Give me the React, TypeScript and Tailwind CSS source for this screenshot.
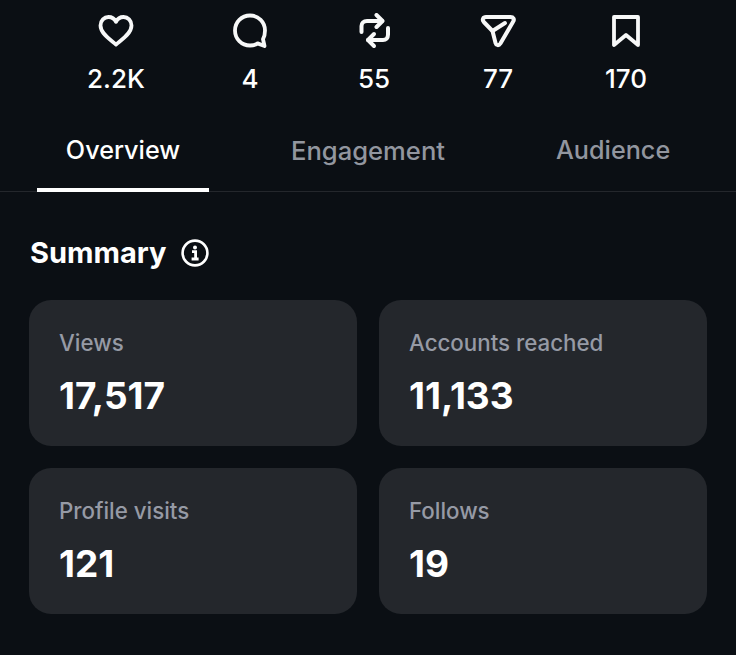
const HeartIcon = () => (
  <svg width="36" height="32" viewBox="0 0 36 32" fill="none" stroke="currentColor" strokeWidth="3.8" strokeLinejoin="round" strokeLinecap="round">
    <path d="M18 29.5 C14 26 2.5 19 2.5 10.5 C2.5 5.5 6.2 2 10.5 2 C13.6 2 16.5 3.8 18 6.8 C19.5 3.8 22.4 2 25.5 2 C29.8 2 33.5 5.5 33.5 10.5 C33.5 19 22 26 18 29.5 Z" />
  </svg>
);

const CommentIcon = () => (
  <svg width="36" height="36" viewBox="0 0 36 36" fill="none" stroke="currentColor" strokeWidth="3.8" strokeLinejoin="round" strokeLinecap="round">
    <path d="M18 2.5 C9.5 2.5 3 9.2 3 17.5 C3 25.8 9.5 32.5 18 32.5 C21 32.5 23.6 31.8 25.6 30.4 L32.5 33 L31 26.2 C32.3 23.8 33 20.8 33 17.5 C33 9.2 26.5 2.5 18 2.5 Z" />
  </svg>
);

const RepostIcon = () => (
  <svg width="32" height="36" viewBox="0 0 32 36" fill="none" stroke="currentColor" strokeWidth="4" strokeLinejoin="round" strokeLinecap="round">
    <path d="M3.5 19 V13 C3.5 10 5.5 8 9 8 H24" />
    <path d="M18.5 2 L24.5 8 L18.5 14" />
    <path d="M30 15 V21.5 C30 25 28 27 25 27 H10" />
    <path d="M16 21 L10 27 L16 33" />
  </svg>
);

const SendIcon = () => (
  <svg width="36" height="34" viewBox="0 0 36 34" fill="none" stroke="currentColor" strokeWidth="4" strokeLinejoin="round" strokeLinecap="round">
    <path d="M6 3 H30.5 C33.5 3 34.6 5.4 33.2 7.5 L20.4 29.5 C18.8 32 16.2 31.4 15.6 29.2 L12.5 17 L3.8 8 C1.8 5.8 3 3 6 3 Z" />
    <path d="M12.5 17 L25 9" />
  </svg>
);

const BookmarkIcon = () => (
  <svg width="28" height="32" viewBox="0 0 28 32" fill="none" stroke="currentColor" strokeWidth="3.8" strokeLinejoin="round" strokeLinecap="round">
    <path d="M2 2 H26 V30 L14 20 L2 30 Z" />
  </svg>
);

const InfoIcon = () => (
  <svg width="28" height="28" viewBox="0 0 28 28" fill="none" stroke="currentColor">
    <circle cx="14" cy="14" r="12.4" strokeWidth="2.6" />
    <circle cx="14" cy="8.4" r="2" fill="currentColor" stroke="none" />
    <path d="M11 12.6 H14.6 V19.6 M10.6 20 H17.6" strokeWidth="2.8" />
  </svg>
);

const stats = [
  { icon: <HeartIcon />, value: "2.2K", className: "ml-[86px]" },
  { icon: <CommentIcon />, value: "4", className: "ml-[74px]" },
  { icon: <RepostIcon />, value: "55", className: "ml-[64px]" },
  { icon: <SendIcon />, value: "77", className: "ml-[64px]" },
  { icon: <BookmarkIcon />, value: "170", className: "ml-[68px]" },
];

const cards = [
  { label: "Views", value: "17,517" },
  { label: "Accounts reached", value: "11,133" },
  { label: "Profile visits", value: "121" },
  { label: "Follows", value: "19" },
];

const App = () => {
  return (
    <div className="h-[655px] w-[736px] overflow-hidden bg-[#0b0f14] font-['Inter',sans-serif] text-white">
      <div className="flex pt-[13px]">
        {stats.map((s) => (
          <div key={s.value} className={`flex w-[60px] flex-col items-center ${s.className}`}>
            <div className="flex h-[36px] items-center justify-center text-[#f7f8f8]">{s.icon}</div>
            <span className="mt-[15px] text-[26px] leading-[30px] font-medium">{s.value}</span>
          </div>
        ))}
      </div>

      <div className="mt-[22px] flex h-[76px] border-b border-[#24272c]">
        <div className="ml-[37px] flex h-[76px] w-[172px] items-center justify-center border-b-4 border-white pb-[2px] text-[25.2px] font-medium">
          Overview
        </div>
        <div className="ml-[82px] flex items-center pb-[5px] text-[25.6px] font-medium text-[#92969f]">Engagement</div>
        <div className="ml-[111px] flex items-center pb-[5px] text-[25.2px] font-medium text-[#92969f]">Audience</div>
      </div>

      <div className="mt-[39px] flex items-center gap-[14px] px-[30px]">
        <h2 className="text-[29px] leading-[44px] font-bold">Summary</h2>
        <InfoIcon />
      </div>

      <div className="mt-[25px] grid grid-cols-[328px_328px] gap-x-[22px] gap-y-[22px] pl-[29px]">
        {cards.map((c) => (
          <div key={c.label} className="h-[146px] rounded-[22px] bg-[#24272c] px-[30px] pt-[28px]">
            <div className="text-[22.3px] leading-[30px] font-medium text-[#969aa5]">{c.label}</div>
            <div className="mt-[14px] text-[37px] leading-[48px] font-bold">{c.value}</div>
          </div>
        ))}
      </div>
    </div>
  );
};

export default App;
